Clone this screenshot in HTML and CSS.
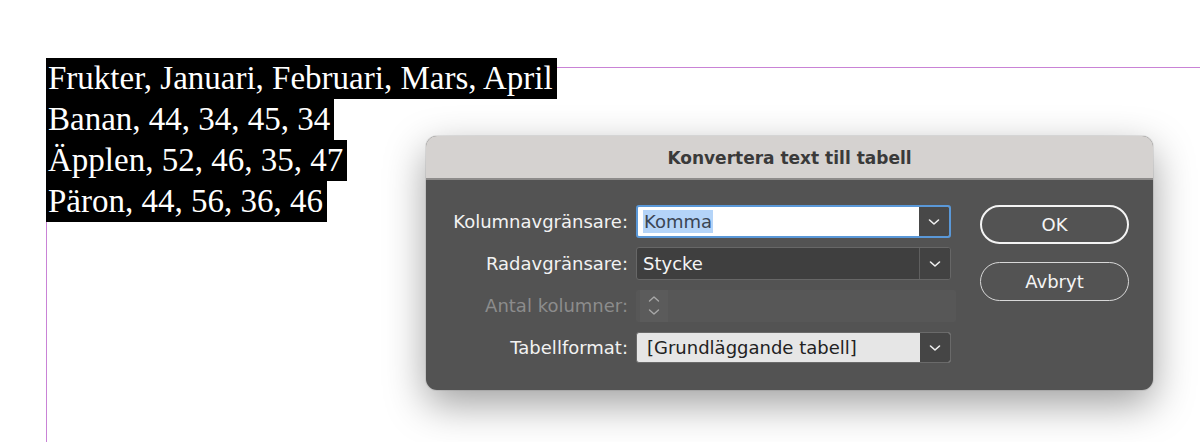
FILE: index.html
```html
<!DOCTYPE html>
<html lang="sv">
<head>
<meta charset="utf-8">
<title>Konvertera text till tabell</title>
<link rel="stylesheet" href="styles.css">
</head>
<body>
<div class="page">
  <div class="frame">
    <div class="story">
      <div class="line">Frukter, Januari, Februari, Mars, April</div>
      <div class="line">Banan, 44, 34, 45, 34</div>
      <div class="line">Äpplen, 52, 46, 35, 47</div>
      <div class="line">Päron, 44, 56, 36, 46</div>
    </div>
  </div>
</div>

<div class="dialog">
  <div class="titlebar">Konvertera text till tabell</div>
  <div class="body">
    <div class="form">
      <div class="row">
        <label class="lbl">Kolumnavgränsare:</label>
        <div class="select focused">
          <span class="value"><span class="sel">Komma</span></span>
          <span class="drop"><svg viewBox="0 0 12 8" class="chev"><path d="M1.5 2 L6 6 L10.5 2"/></svg></span>
        </div>
      </div>
      <div class="row">
        <label class="lbl">Radavgränsare:</label>
        <div class="select dark">
          <span class="value">Stycke</span>
          <span class="drop"><svg viewBox="0 0 12 8" class="chev"><path d="M1.5 2 L6 6 L10.5 2"/></svg></span>
        </div>
      </div>
      <div class="row">
        <label class="lbl disabled">Antal kolumner:</label>
        <div class="numfield">
          <span class="spinner">
            <svg viewBox="0 0 12 8" class="spin"><path d="M1.5 6 L6 2 L10.5 6"/></svg>
            <svg viewBox="0 0 12 8" class="spin"><path d="M1.5 2 L6 6 L10.5 2"/></svg>
          </span>
        </div>
      </div>
      <div class="row">
        <label class="lbl">Tabellformat:</label>
        <div class="select light">
          <span class="value">[Grundläggande tabell]</span>
          <span class="drop"><svg viewBox="0 0 12 8" class="chev"><path d="M1.5 2 L6 6 L10.5 2"/></svg></span>
        </div>
      </div>
    </div>
    <div class="buttons">
      <button class="btn default">OK</button>
      <button class="btn">Avbryt</button>
    </div>
  </div>
</div>
</body>
</html>
```

FILE: styles.css
```css
* { box-sizing: border-box; }
html, body { margin: 0; padding: 0; }
body {
  width: 1200px;
  height: 442px;
  overflow: hidden;
  background: #ffffff;
  position: relative;
  font-family: "DejaVu Sans", Inter, sans-serif;
}

.page {
  padding: 67px 0 0 46px;
  height: 442px;
}
.frame {
  height: 375px;
  border-top: 1px solid #c983d6;
  border-left: 1px solid #c983d6;
}
.story {
  margin-top: -10px;
  margin-left: -1px;
  font-family: "Liberation Serif", "Times New Roman", serif;
  font-size: 33px;
  color: #ffffff;
}
.line {
  width: fit-content;
  background: #000000;
  line-height: 41px;
  height: 41px;
  padding: 0 4px 0 2px;
  white-space: nowrap;
}

.dialog {
  position: absolute;
  left: 426px;
  top: 136px;
  width: 727px;
  height: 254px;
  border-radius: 11px;
  background: #535353;
  overflow: hidden;
  box-shadow: 0 14px 40px rgba(0,0,0,0.38), 0 0 0 1px rgba(0,0,0,0.08);
}
.titlebar {
  height: 44px;
  background: #d5d2d0;
  border-bottom: 2px solid #8e8c8b;
  color: #3a3a3a;
  font-weight: 700;
  font-size: 17px;
  text-align: center;
  line-height: 44px;
}
.body {
  display: flex;
  padding: 25px 24px 0 0;
}
.form {
  display: flex;
  flex-direction: column;
  gap: 9px;
}
.row {
  display: flex;
  align-items: center;
  height: 33px;
}
.lbl {
  width: 210px;
  text-align: right;
  color: #f2f2f2;
  font-size: 18px;
  padding-right: 8px;
  white-space: nowrap;
}
.lbl.disabled { color: #8c8c8c; }

.select {
  width: 315px;
  height: 33px;
  display: flex;
  border-radius: 3px;
  font-size: 18px;
  overflow: hidden;
}
.select .value {
  flex: 1;
  display: flex;
  align-items: center;
  padding-left: 6px;
  white-space: nowrap;
}
.select .drop {
  width: 30px;
  display: flex;
  align-items: center;
  justify-content: center;
  background: #484848;
}
.chev {
  width: 12px;
  height: 8px;
  fill: none;
  stroke: #f0f0f0;
  stroke-width: 1.6;
  stroke-linecap: round;
  stroke-linejoin: round;
}
.focused {
  border: 2px solid #5a98d8;
  background: #ffffff;
}
.focused .value { color: #3b4654; padding-left: 5px; }
.focused .sel { background: #b4d4f8; padding: 1px 1px; }
.dark {
  border: 1px solid #676767;
  background: #3f3f3f;
}
.dark .value { color: #f5f5f5; border-right: 1px solid #5f5f5f; }
.dark .drop { background: #424242; }
.light {
  border: 1px solid #6a6a6a;
  background: #e6e6e6;
  height: 31px;
}
.light .value { color: #222222; padding-left: 10px; }
.light .drop { background: #454545; }

.numfield {
  width: 320px;
  height: 32px;
  background: #575757;
  border-radius: 2px;
  display: flex;
}
.spinner {
  width: 28px;
  margin-left: 4px;
  background: #5b5b5b;
  display: flex;
  flex-direction: column;
  align-items: center;
  justify-content: center;
  gap: 5px;
}
.spin {
  width: 12px;
  height: 8px;
  fill: none;
  stroke: #a8a8a8;
  stroke-width: 1.4;
  stroke-linecap: round;
  stroke-linejoin: round;
}

.buttons {
  margin-left: auto;
  display: flex;
  flex-direction: column;
  gap: 18px;
}
.btn {
  width: 149px;
  height: 39px;
  border-radius: 20px;
  background: transparent;
  color: #f5f5f5;
  font-family: "DejaVu Sans", Inter, sans-serif;
  font-size: 18px;
  border: 1px solid #d8d8d8;
  padding: 0;
}
.btn.default { border: 2.5px solid #f4f4f4; }
```
